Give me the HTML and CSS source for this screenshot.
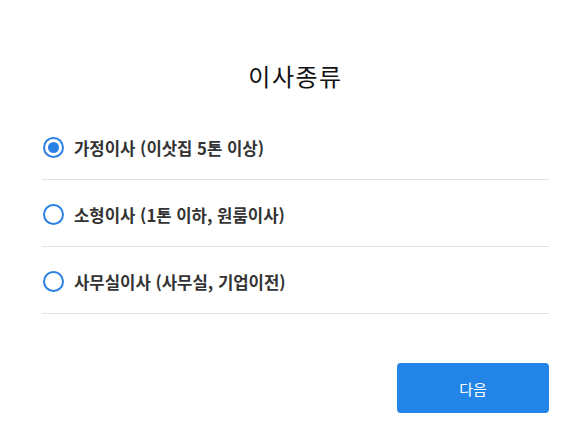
FILE: index.html
```html
<!DOCTYPE html>
<html lang="ko">
<head>
    <meta charset="UTF-8">
    <meta name="viewport" content="width=device-width, initial-scale=1.0">
    <title>이사종류</title>
    <link rel="stylesheet" href="styles.css">
</head>
<body>
    <div class="page">
        <h1 class="title">이사종류</h1>

        <ul class="options">
            <li class="option">
                <span class="radio checked"></span>
                <span class="label">가정이사 (이삿집 5톤 이상)</span>
            </li>
            <li class="option">
                <span class="radio"></span>
                <span class="label">소형이사 (1톤 이하, 원룸이사)</span>
            </li>
            <li class="option">
                <span class="radio"></span>
                <span class="label">사무실이사 (사무실, 기업이전)</span>
            </li>
        </ul>

        <div class="actions">
            <button class="next-btn">다음</button>
        </div>
    </div>
</body>
</html>
```

FILE: styles.css
```css
body { margin: 0; background: #fff; font-family: "Noto Sans CJK KR", "Noto Sans", sans-serif; color: #333; }
.page { padding: 61px 38px 0 42px; }
.title { margin: 0; font-size: 24px; font-weight: 400; line-height: 30px; letter-spacing: 1.5px; text-align: center; color: #111; }
.options { list-style: none; margin: 22px 0 0; padding: 0; }
.option { display: flex; align-items: center; gap: 10px; padding: 24px 0 21px 1px; border-bottom: 1px solid #e2e2e2; }
.radio { box-sizing: border-box; width: 21px; height: 21px; border: 2px solid #2b80e4; border-radius: 50%; display: flex; align-items: center; justify-content: center; }
.radio.checked::after { content: ""; width: 11px; height: 11px; border-radius: 50%; background: #2b80e4; }
.label { font-size: 16.7px; font-weight: 700; line-height: 20px; color: #333; }
.actions { display: flex; justify-content: flex-end; margin-top: 49px; }
.next-btn { width: 152px; height: 50px; border: none; border-radius: 4px; background: #2184e6; color: #fff; font-family: inherit; font-size: 15px; cursor: pointer; }
```
